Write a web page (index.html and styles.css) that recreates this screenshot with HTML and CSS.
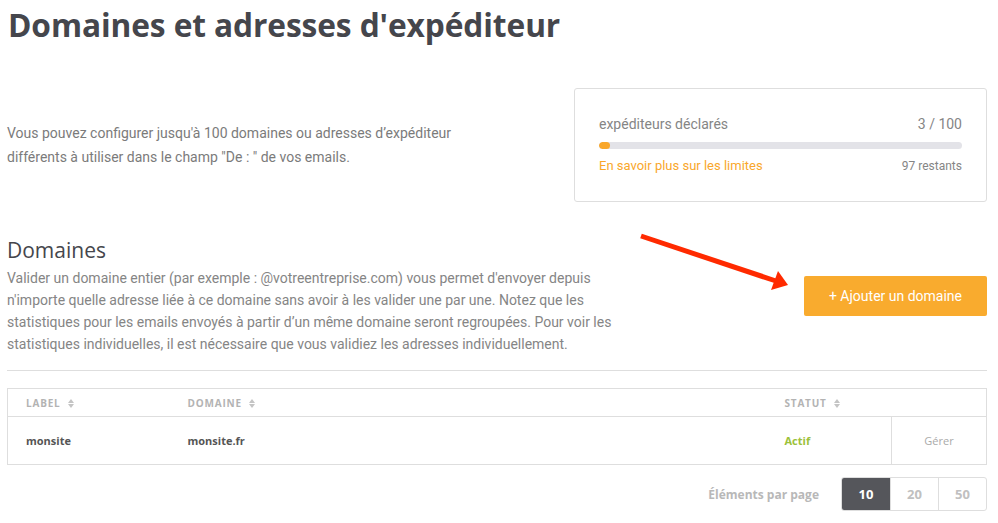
FILE: index.html
```html
<!DOCTYPE html>
<html>
	<head>
		<meta charset="UTF-8">
		<title>Domaines et adresses d'expéditeur</title>
		<link rel="stylesheet" href="styles.css">
	</head>
	<body>
		<div class="page">
			<h1 class="title">Domaines et adresses d'expéditeur</h1>

			<div class="intro">
				<p class="intro-text">Vous pouvez configurer jusqu'à 100 domaines ou adresses d’expéditeur<br>différents à utiliser dans le champ "De : " de vos emails.</p>
				<div class="quota">
					<div class="quota-row">
						<span>expéditeurs déclarés</span>
						<span>3 / 100</span>
					</div>
					<div class="bar"><div class="bar-fill" style="width:3%"></div></div>
					<div class="quota-row small">
						<a href="#" class="link">En savoir plus sur les limites</a>
						<span>97 restants</span>
					</div>
				</div>
			</div>

			<div class="section">
				<div class="section-text">
					<h2>Domaines</h2>
					<p>Valider un domaine entier (par exemple : @votreentreprise.com) vous permet d'envoyer depuis n'importe quelle adresse liée à ce domaine sans avoir à les valider une par une. Notez que les statistiques pour les emails envoyés à partir d’un même domaine seront regroupées. Pour voir les statistiques individuelles, il est nécessaire que vous validiez les adresses individuellement.</p>
				</div>
				<a href="#" class="btn">+ Ajouter un domaine</a>
				<svg class="arrow" width="160" height="64" viewBox="0 0 160 64">
					<line x1="3" y1="3" x2="138" y2="48" stroke="#ff2a00" stroke-width="5"/>
					<polygon points="150,52 140,38 133,57" fill="#ff2a00"/>
				</svg>
			</div>

			<hr class="sep">

			<table class="grid">
				<thead>
					<tr>
						<th class="c-label">Label <svg class="sort" width="6" height="9" viewBox="0 0 6 9"><path d="M3 0L6 4H0Z M3 9L0 5H6Z" fill="#c4c4c4"/></svg></th>
						<th class="c-domain">Domaine <svg class="sort" width="6" height="9" viewBox="0 0 6 9"><path d="M3 0L6 4H0Z M3 9L0 5H6Z" fill="#c4c4c4"/></svg></th>
						<th class="c-status">Statut <svg class="sort" width="6" height="9" viewBox="0 0 6 9"><path d="M3 0L6 4H0Z M3 9L0 5H6Z" fill="#c4c4c4"/></svg></th>
						<th class="c-action"></th>
					</tr>
				</thead>
				<tbody>
					<tr>
						<td class="c-label">monsite</td>
						<td class="c-domain">monsite.fr</td>
						<td class="c-status active">Actif</td>
						<td class="c-action"><a href="#">Gérer</a></td>
					</tr>
				</tbody>
			</table>

			<div class="pager">
				<span class="pager-label">Éléments par page</span>
				<div class="pager-btns">
					<a href="#" class="on">10</a>
					<a href="#">20</a>
					<a href="#">50</a>
				</div>
			</div>
		</div>
	</body>
</html>
```

FILE: styles.css
```css
*{
	padding:0px;margin:0px;box-sizing:border-box;
}
a{
	text-decoration: none;
}
body{
	background:#fff;
	font-family: Roboto, "Liberation Sans", sans-serif;
	color:#7b7b7b;
}
.page{
	padding: 0 11px 0 7px;
}
.title{
	font-family: "Open Sans", sans-serif;
	font-weight: 700;
	font-size: 31.7px;
	letter-spacing: -0.1px;
	line-height: 40px;
	color:#45464c;
	padding: 5px 0 0 1px;
}
.intro{
	display: flex;
	justify-content: space-between;
	align-items: center;
	margin-top: 43px;
}
.intro-text{
	font-size: 14px;
	line-height: 24px;
	color:#7b7b7b;
}
.quota{
	width: 413px;
	height: 114px;
	border: 1px solid #dedede;
	border-radius: 3px;
	padding: 25px 24px 0 24px;
}
.quota-row{
	display: flex;
	justify-content: space-between;
	font-size: 14px;
	line-height: 20px;
	color:#858585;
}
.quota-row.small{
	font-size: 12px;
	margin-top: 7px;
}
.link{
	color:#f9a72b;
	font-size: 13px;
}
.bar{
	height: 7px;
	background:#e3e3e8;
	border-radius: 4px;
	margin-top: 8px;
	overflow: hidden;
}
.bar-fill{
	height: 100%;
	background:#f9a72b;
	border-radius: 4px;
}
.section{
	position: relative;
	display: flex;
	justify-content: space-between;
	align-items: center;
	margin-top: 31px;
}
.section-text h2{
	font-family: "Open Sans", sans-serif;
	font-weight: 400;
	font-size: 21px;
	line-height: 34px;
	color:#45464c;
}
.section-text p{
	width: 612px;
	font-size: 14px;
	line-height: 22px;
	color:#858585;
}
.btn{
	display: block;
	width: 183px;
	height: 40px;
	line-height: 40px;
	text-align: center;
	background:#f9ab2e;
	color:#fff;
	font-size: 14px;
	border-radius: 2px;
	margin-top: 4px;
}
.arrow{
	position: absolute;
	left: 631px;
	top: 0px;
}
.sep{
	border: none;
	border-top: 1px solid #dedede;
	margin-top: 15px;
}
.grid{
	width: 100%;
	margin-top: 17px;
	border-collapse: collapse;
	border: 1px solid #dedede;
	font-family: "Open Sans", sans-serif;
}
.grid th{
	height: 28px;
	text-align: left;
	font-size: 10px;
	font-weight: 700;
	letter-spacing: 0.8px;
	text-transform: uppercase;
	color:#b3b3b3;
	border-bottom: 1px solid #dedede;
}
.grid td{
	height: 48px;
	font-size: 11px;
	font-weight: 700;
	color:#555;
}
.sort{
	margin-left: 4px;
	vertical-align: -1px;
}
.c-label{
	width: 180px;
	padding-left: 18px;
}
.c-domain{
	width: 597px;
}
.c-status{
	width: 107px;
}
.grid td.active{
	color:#9cc13a;
}
.grid td.c-action{
	border-left: 1px solid #dedede;
	text-align: center;
	font-weight: 400;
}
.c-action a{
	color:#aaa;
}
.pager{
	display: flex;
	justify-content: flex-end;
	align-items: center;
	margin-top: 12px;
}
.pager-label{
	font-family: "Open Sans", sans-serif;
	font-size: 12px;
	font-weight: 700;
	color:#b8b8b8;
	margin-right: 22px;
}
.pager-btns{
	display: flex;
	border: 1px solid #dedede;
	border-radius: 3px;
	overflow: hidden;
}
.pager-btns a{
	width: 48px;
	height: 32px;
	line-height: 32px;
	text-align: center;
	font-family: "Open Sans", sans-serif;
	font-size: 13px;
	font-weight: 700;
	color:#c0c0c0;
	border-left: 1px solid #dedede;
}
.pager-btns a:first-child{
	border-left: none;
}
.pager-btns a.on{
	background:#55565b;
	color:#fff;
}
```
